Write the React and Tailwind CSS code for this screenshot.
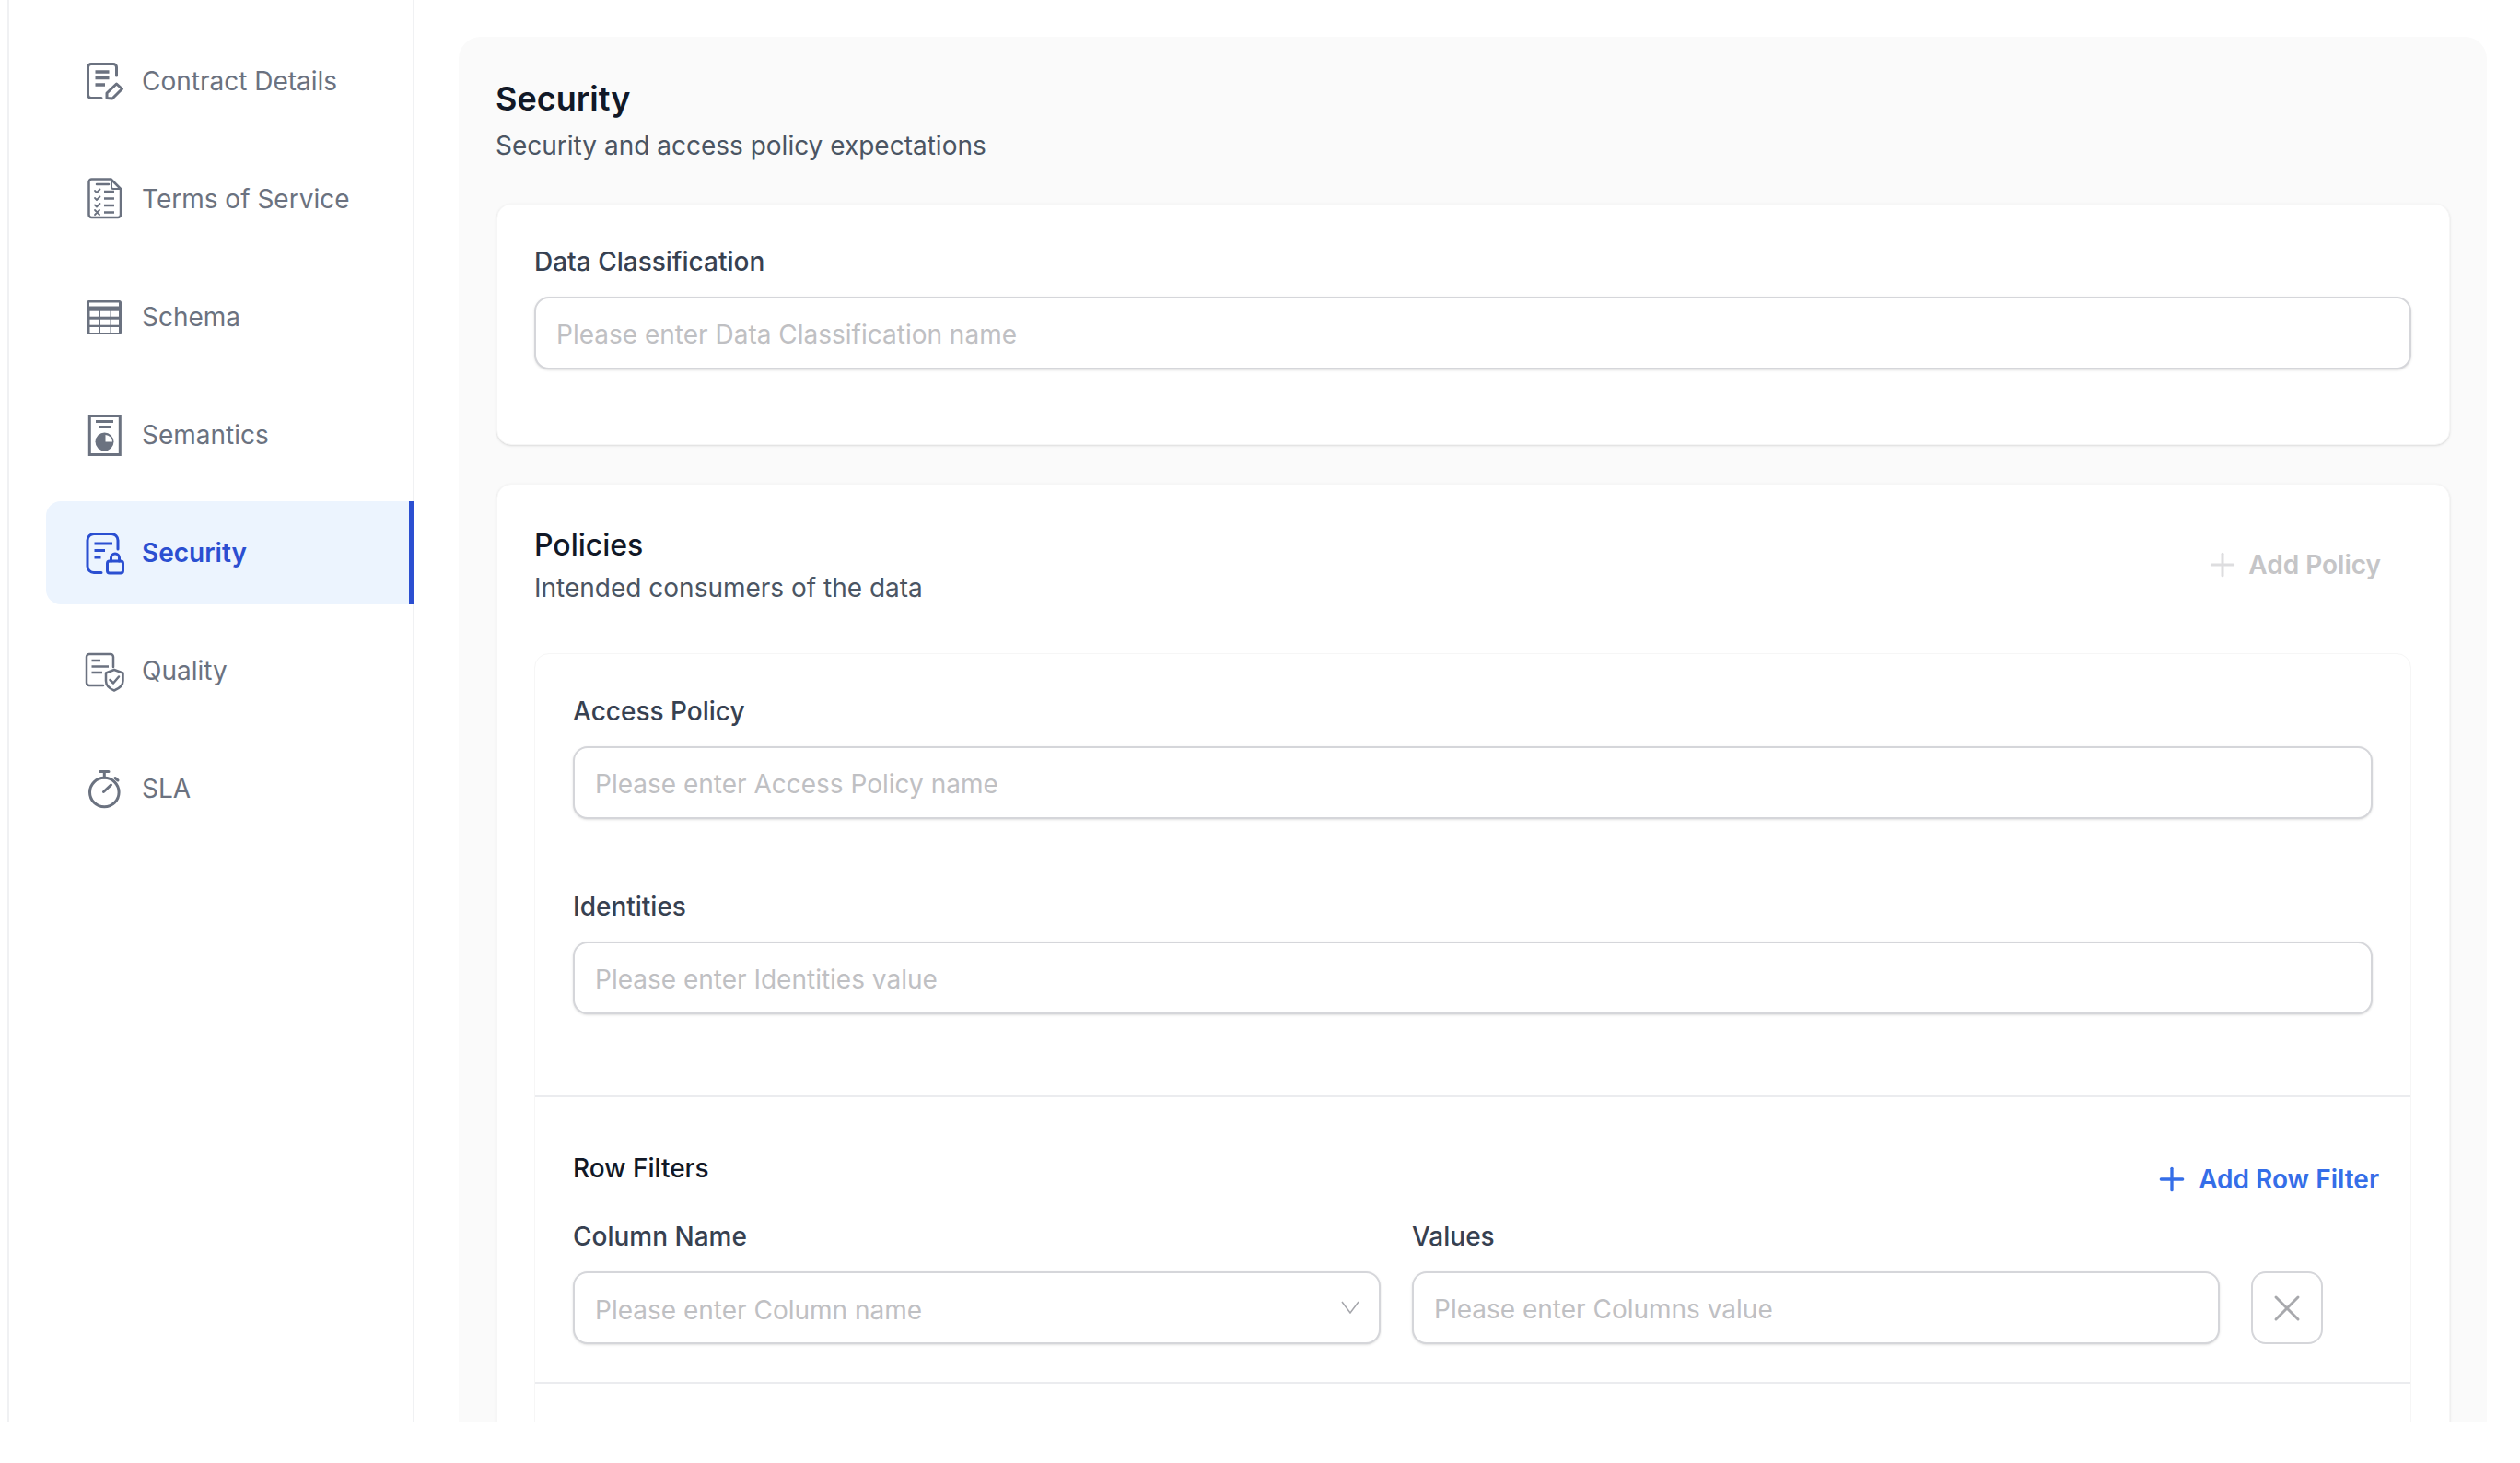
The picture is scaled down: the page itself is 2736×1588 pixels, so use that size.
import { Plus, X } from 'lucide-react';

function IconContract() {
  return (
    <svg width="44" height="48" viewBox="0 0 44 48" fill="none" stroke="currentColor" strokeWidth="3" strokeLinecap="round" strokeLinejoin="round">
      <path d="M18 42.500H7a3.500 3.500 0 0 1-3.500-3.500V9A3.500 3.500 0 0 1 7 5.500h24A3.500 3.500 0 0 1 34.500 9v9" />
      <path d="M11.500 14H26.500M11.500 20.500H26.500M11.500 28H22" strokeWidth="3.500" strokeLinecap="butt" />
      <path d="M24 42.500v-5.500L34.500 27l6 5.500-10.500 10.500z" />
    </svg>
  );
}

function IconTerms() {
  return (
    <svg width="44" height="48" viewBox="0 0 44 48" fill="none" stroke="currentColor" strokeWidth="2.500" strokeLinecap="round" strokeLinejoin="round">
      <path d="M7.500 2.500H28.500L39 13V41a3 3 0 0 1-3 3H7.500a3 3 0 0 1-3-3V5.500a3 3 0 0 1 3-3z" />
      <path d="M29 3v8a2 2 0 0 0 2 2h7" strokeWidth="2" />
      <path d="M13 8H26" />
      <path d="M11 15l2 2 3.500-3.500M11 23l2 2 3.500-3.500M11 30.500l2 2 3.500-3.500M11 36l5 5M16 36l-5 5" strokeWidth="1.800" />
      <path d="M21 16H32M21 23.500H32M21 31H32M21 38.500H32" strokeLinecap="butt" />
    </svg>
  );
}

function IconSchema() {
  return (
    <svg width="44" height="48" viewBox="0 0 44 48">
      <rect x="2" y="6" width="38" height="37" rx="2.500" fill="currentColor" />
      <rect x="5" y="8.500" width="32" height="4" fill="#fff" />
      {[17.700, 26.700, 35].map((y) =>
        [5.500, 17, 29].map((x) => (
          <rect key={`${x}-${y}`} x={x} y={y} width={x === 29 ? 8 : 10.500} height="6" fill="#fff" />
        ))
      )}
    </svg>
  );
}

function IconSemantics() {
  return (
    <svg width="44" height="48" viewBox="0 0 44 48" fill="none" stroke="currentColor" strokeWidth="3">
      <rect x="5.300" y="3.500" width="33" height="42" />
      <path d="M12 9.500H31M16 15.500H28" />
      <circle cx="21.500" cy="31.500" r="10" strokeWidth="0" fill="currentColor" />
      <path d="M22.500 24a8 8 0 0 1 7.500 7.500h-7.500z" strokeWidth="0" fill="#fff" />
    </svg>
  );
}

function IconSecurity() {
  return (
    <svg width="44" height="48" viewBox="0 0 44 48" fill="none" stroke="currentColor" strokeWidth="3" strokeLinecap="round" strokeLinejoin="round">
      <path d="M18 45.500H10a7 7 0 0 1-7-7V10.500a7 7 0 0 1 7-7H29a7 7 0 0 1 7 7V20" />
      <path d="M10.500 14H30M10.500 21.500H22M10.500 29H17.500" strokeLinecap="butt" />
      <rect x="24.500" y="33" width="17" height="13" rx="2.500" />
      <path d="M28.500 33v-3.500a4.500 4.500 0 0 1 9 0V33" />
    </svg>
  );
}

function IconQuality() {
  return (
    <svg width="44" height="48" viewBox="0 0 44 48" fill="none" stroke="currentColor" strokeWidth="2.500" strokeLinecap="round" strokeLinejoin="round">
      <path d="M20 40H5a3 3 0 0 1-3-3V9a3 3 0 0 1 3-3H28a3 3 0 0 1 3 3V20" />
      <path d="M7.500 13H17M7.500 19.500H26M7.500 26H19" strokeLinecap="butt" />
      <path d="M32 23l9.500 3.500V35c0 5-4.500 8.500-9.500 10.500C27 43.500 23 40 23 35v-8.500z" />
      <path d="M27.500 34l3.500 3.500 6-7" />
    </svg>
  );
}

function IconSla() {
  return (
    <svg width="44" height="48" viewBox="0 0 44 48" fill="none" stroke="currentColor" strokeWidth="3" strokeLinecap="round">
      <circle cx="21.300" cy="28" r="15.800" />
      <path d="M16.500 5.500H26M21.300 5.500V12M20.500 27.500L28.500 20M33 12.500l3 2.500" />
    </svg>
  );
}

const NAV = [
  { label: 'Contract Details', Icon: IconContract },
  { label: 'Terms of Service', Icon: IconTerms },
  { label: 'Schema', Icon: IconSchema },
  { label: 'Semantics', Icon: IconSemantics },
  { label: 'Security', Icon: IconSecurity, active: true },
  { label: 'Quality', Icon: IconQuality },
  { label: 'SLA', Icon: IconSla },
];

const inputClass =
  'w-full h-[79px] rounded-2xl border-2 border-[#d5d6da] bg-white px-[22px] pt-[2px] text-[28px] shadow-sm outline-none placeholder:text-[#bfc0c3]';

const labelClass = 'flex h-10 items-center pt-[2px] mb-[19px] text-[28px] font-medium text-[#374151]';

function Field({ label, placeholder, className = '' }) {
  return (
    <div className={className}>
      <label className={labelClass}>{label}</label>
      <input className={inputClass} placeholder={placeholder} />
    </div>
  );
}

export default function App() {
  return (
    <div className="flex h-[1544px] overflow-hidden bg-white font-[Inter,sans-serif]">
      {/* Sidebar */}
      <aside className="ml-2 w-[442px] shrink-0 flex flex-col gap-4 border-x-2 border-[#f0f1f3] pt-8 pl-10">
        {NAV.map(({ label, Icon, active }) => (
          <a
            key={label}
            className={`-mr-[2px] flex h-28 items-center gap-[18px] pl-[42px] text-[28px] ${
              active
                ? 'rounded-l-2xl border-r-[6px] border-[#2b4fd1] bg-[#ecf4fe] font-semibold text-[#2b4fd1]'
                : 'text-[#6b7280]'
            }`}
          >
            <Icon />
            {label}
          </a>
        ))}
      </aside>

      {/* Main panel */}
      <main className="flex-1 pl-12 pr-9 pt-10">
        <div className="rounded-3xl bg-[#fafafa] pl-[41px] pr-10 pt-[43px]">
          <h1 className="-ml-px h-12 flex items-center text-[36px] font-semibold text-[#111827]">Security</h1>
          <p className="-ml-px mt-[9px] h-9 flex items-center text-[28px] text-[#4b5563]">Security and access policy expectations</p>

          <section className="mt-[45px] rounded-2xl border border-[#f6f6f6] bg-white pl-10 pr-[41px] pt-[42px] pb-[81px] shadow-sm">
            <label className="flex h-10 items-center mb-[18px] text-[28px] font-medium text-[#374151]">Data Classification</label>
            <input className={inputClass} placeholder="Please enter Data Classification name" />
          </section>

          <section className="mt-[42px] rounded-2xl border border-[#f6f6f6] bg-white pl-10 pr-[41px] pt-[40px] shadow-sm">
            <div className="flex justify-between">
              <div>
                <h2 className="h-12 flex items-center pt-[3px] text-[32px] font-medium text-[#111827]">Policies</h2>
                <p className="h-12 flex items-center text-[28px] text-[#4b5563]">Intended consumers of the data</p>
              </div>
              <button className="mt-[27px] mr-[33px] flex h-10 items-center gap-2 text-[28px] font-semibold text-[#c5c5c7]">
                <Plus size={40} strokeWidth={1.800} className="text-[#dddddf]" />
                Add Policy
              </button>
            </div>

            <div className="mt-[47px] rounded-2xl border border-[#f6f6f6] bg-white pt-[41px]">
              <div className="pl-[41px] pr-[41px]">
                <Field label="Access Policy" placeholder="Please enter Access Policy name" />
                <Field className="mt-[74px]" label="Identities" placeholder="Please enter Identities value" />
              </div>

              <div className="mt-[88px] border-t-2 border-[#ebecef] pl-[41px] pr-[41px] pt-14">
                <div className="flex items-start justify-between">
                  <h3 className="flex h-10 items-center pt-[2px] text-[28px] font-medium text-[#111827]">Row Filters</h3>
                  <button className="-mr-[7px] mt-[13px] flex h-10 items-center gap-[9px] text-[28px] font-semibold text-[#356ee8]">
                    <Plus size={40} strokeWidth={2} />
                    Add Row Filter
                  </button>
                </div>

                <div className="mt-[21px] flex items-end gap-[34px] pr-[54px] pb-[41px]">
                  <div className="flex-1">
                    <label className={labelClass}>Column Name</label>
                    <div className="relative">
                      <input className={`${inputClass} pt-[4px]`} placeholder="Please enter Column name" />
                      <svg width="20" height="14" viewBox="0 0 20 14" fill="none" stroke="#a5a6ab" strokeWidth="1.500" className="absolute right-[23px] top-[32px]">
                        <path d="M1 1l9 12 9-12" />
                      </svg>
                    </div>
                  </div>
                  <Field className="flex-1" label="Values" placeholder="Please enter Columns value" />
                  <button className="flex h-[79px] w-[78px] shrink-0 items-center justify-center rounded-2xl border-2 border-[#d5d6da] text-[#a8a9ad]">
                    <X size={48} strokeWidth={1.500} />
                  </button>
                </div>
              </div>

              <div className="border-t-2 border-[#ebecef] h-24" />
            </div>
          </section>
        </div>
      </main>
    </div>
  );
}
